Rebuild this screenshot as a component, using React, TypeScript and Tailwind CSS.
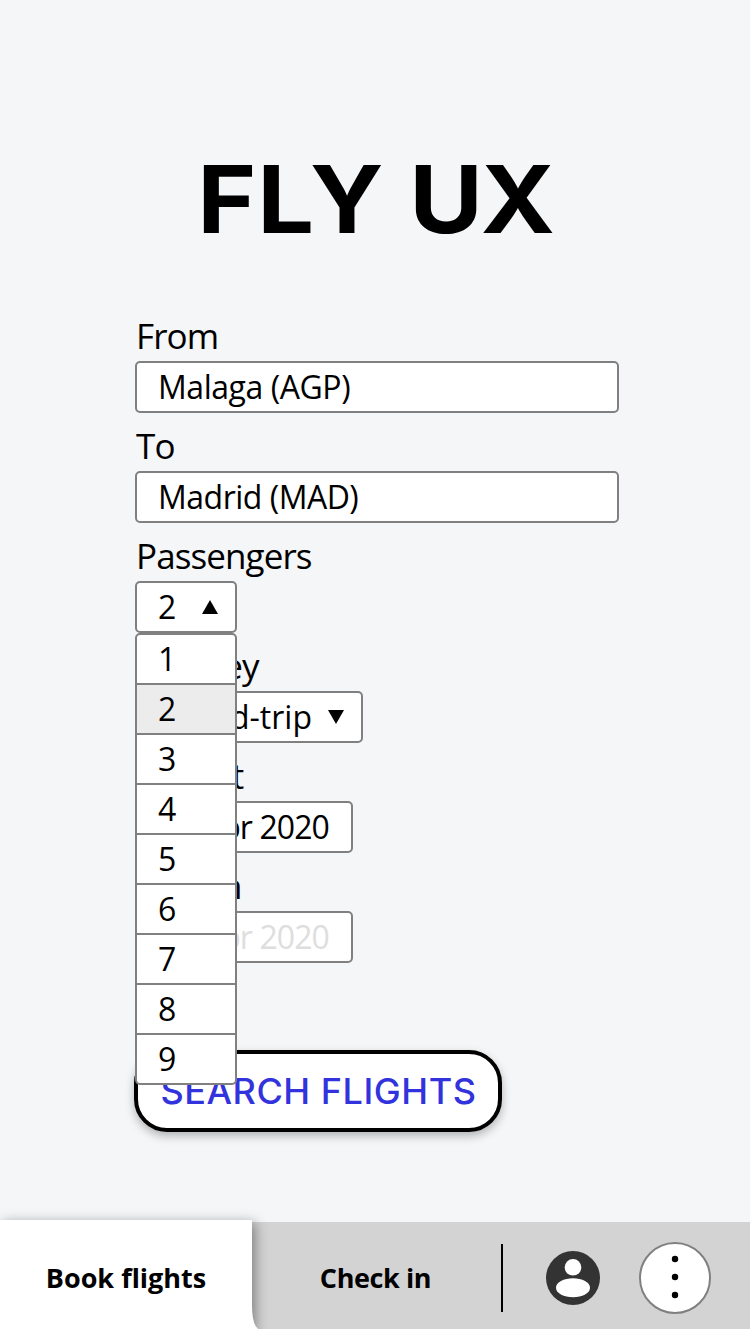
import type { ReactNode } from "react";

function Label({ children }: { children: ReactNode }) {
  return (
    <div className="flex h-12 items-center pb-1 pl-px text-[35px] leading-none tracking-[-0.9px] whitespace-nowrap">
      {children}
    </div>
  );
}

const BOX = "flex h-[52px] items-center rounded-[5px] border-2 border-[#808080] bg-white text-[32px] leading-none whitespace-nowrap";

const passengerOptions = [1, 2, 3, 4, 5, 6, 7, 8, 9];

export default function App() {
  return (
    <div className="flex h-[1334px] w-[750px] flex-col overflow-hidden bg-white font-['Open_Sans','Noto_Sans',sans-serif] text-black">
      <main className="h-[1222px] shrink-0 bg-[#f4f6f8]">
        <h1 className="flex h-[313px] items-start justify-center pt-[150px] font-['Inter',sans-serif] text-[94px] leading-[98px] font-bold whitespace-nowrap">
          <span className="ml-1 scale-x-[1.07] tracking-[0.8px]">
            F<span className="tracking-[-3.7px]">L</span>Y <span className="tracking-[-2px]">U</span>X
          </span>
        </h1>

        <form className="flex w-[484px] flex-col gap-2.5 ml-[135px]">
          <div>
            <Label>From</Label>
            <div className={BOX}><span className="pl-[21px] tracking-[-0.45px]">Malaga (AGP)</span></div>
          </div>
          <div>
            <Label>To</Label>
            <div className={BOX}><span className="pl-[21px] tracking-[-0.5px]">Madrid (MAD)</span></div>
          </div>
          <div className="relative z-10">
            <Label>Passengers</Label>
            <div className={`${BOX} w-[102px] justify-between pr-[17px] pl-[21px]`}>
              <span>2</span>
              <svg width="16" height="14" viewBox="0 0 16 14"><path d="M8 0L16 14H0Z" /></svg>
            </div>
            <ul className="absolute top-full left-0 w-[102px] overflow-hidden rounded-[5px] border-2 border-[#808080] bg-white text-[32px]">
              {passengerOptions.map((n) => (
                <li
                  key={n}
                  className={`flex h-[50px] items-center border-[#808080] pl-[21px] leading-none not-last:border-b-2 last:h-12 ${n === 2 ? "bg-[#ececec]" : ""}`}
                >
                  {n}
                </li>
              ))}
            </ul>
          </div>
          <div>
            <Label><span className="ml-1">Journey</span></Label>
            <div className={`${BOX} w-[228px] justify-end gap-4 pr-[17px]`}>
              <span>Round-trip</span>
              <svg width="16" height="14" viewBox="0 0 16 14"><path d="M0 0H16L8 14Z" /></svg>
            </div>
          </div>
          <div>
            <Label>Depart</Label>
            <div className={`${BOX} w-[218px] justify-end pr-[22px] tracking-[-0.9px]`}>17 Apr 2020</div>
          </div>
          <div>
            <Label>Return</Label>
            <div className={`${BOX} w-[218px] justify-end pr-[22px] tracking-[-0.9px] text-[#dedede]`}>24 Apr 2020</div>
          </div>
        </form>

        <button className="mt-[87px] ml-[134px] flex h-[82px] w-[368px] items-center justify-center rounded-[33px] border-4 border-black bg-white font-['Inter',sans-serif] text-[35px] leading-none font-medium whitespace-nowrap text-[#3333dd] shadow-[0_4px_10px_rgba(0,0,0,0.28)]">
          <span className="scale-x-[1.03] tracking-[0.5px]">SEARCH FLIGHTS</span>
        </button>
      </main>

      <nav className="relative flex h-[107px] shrink-0 bg-[#d3d3d3] text-[27px] font-bold">
        <div className="-mt-0.5 flex h-[114px] w-[252px] items-center justify-center bg-white pt-0.5 shadow-[3px_3px_12px_rgba(0,0,0,0.42)]">
          <span className="mt-px">Book flights</span>
        </div>
        <svg className="absolute bottom-0 left-[252px]" width="6" height="24" viewBox="0 0 6 24">
          <path d="M0 0Q0 19 6 24H0Z" fill="#fff" />
        </svg>
        <div className="flex h-full w-[249px] items-center justify-center pt-1.5 pr-0.5">
          <span className="tracking-[-0.4px]">Check in</span>
        </div>
        <div className="mt-[22px] h-[68px] w-0.5 bg-black" />
        <svg className="mt-[29px] ml-[43px]" width="54" height="54" viewBox="0 0 54 54">
          <circle cx="27" cy="27" r="27" fill="#333" />
          <circle cx="27" cy="16.3" r="8.3" fill="#fff" />
          <ellipse cx="27" cy="36.7" rx="17" ry="9.5" fill="#fff" />
        </svg>
        <svg className="mt-5 ml-[39px]" width="72" height="72" viewBox="0 0 72 72">
          <circle cx="36" cy="36" r="35" fill="#fff" stroke="#808080" strokeWidth="2" />
          <circle cx="36" cy="17" r="3.2" />
          <circle cx="36" cy="35" r="3.2" />
          <circle cx="36" cy="53" r="3.2" />
        </svg>
      </nav>
      <div className="relative z-10 h-[5px] shrink-0 bg-white" />
    </div>
  );
}
